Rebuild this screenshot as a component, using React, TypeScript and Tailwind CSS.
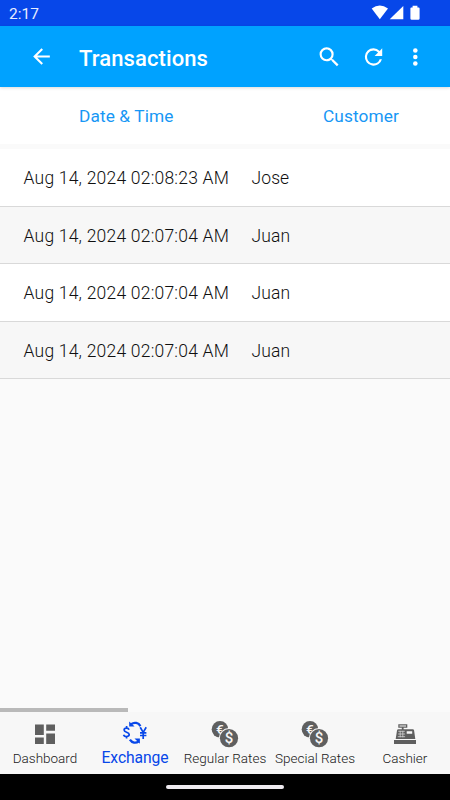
import type { ReactNode } from "react";

const transactions = [
  { date: "Aug 14, 2024 02:08:23 AM", customer: "Jose", style: "h-[58px] bg-white" },
  { date: "Aug 14, 2024 02:07:04 AM", customer: "Juan", style: "h-[57px] bg-[#f7f7f7]" },
  { date: "Aug 14, 2024 02:07:04 AM", customer: "Juan", style: "h-[58px] bg-white" },
  { date: "Aug 14, 2024 02:07:04 AM", customer: "Juan", style: "h-[57px] bg-[#f7f7f7]" },
];

function StatusBar() {
  return (
    <div className="flex h-[26px] shrink-0 items-center justify-between bg-[#0747e9] pl-[9px] pr-[30px] text-white">
      <span className="pt-[3px] text-[15.5px] leading-none text-[#e6edff]">2:17</span>
      <svg className="h-[26px] w-[49px]" viewBox="371 0 49 26" fill="currentColor">
        <path d="M371.7 8.4 Q379.8 2.6 388 8.4 L379.8 19.3Z" />
        <path d="M403.3 6v13.3h-13.6Z" />
        <path d="M412.6 5.8h4.8v1.6h1.2q1 0 1 1v10q0 1.4-1.4 1.4h-6.4q-1.4 0-1.4-1.4v-10q0-1 1-1h1.2Z" />
      </svg>
    </div>
  );
}

function AppBar() {
  return (
    <header className="relative z-10 flex h-[61px] shrink-0 items-center bg-[#00a2ff] pl-[29px] text-white shadow-[0_1px_3px_rgba(0,0,0,0.15)]">
      <svg className="size-[25px]" viewBox="0 0 24 24" fill="currentColor">
        <path d="M20 11H7.83l5.59-5.59L12 4l-8 8 8 8 1.41-1.41L7.83 13H20v-2z" />
      </svg>
      <h1 className="ml-[25px] flex-1 pt-[4px] text-[22px] font-medium leading-none tracking-[0.1px]">Transactions</h1>
      <svg className="mr-[18px] size-[26px]" viewBox="-0.3 0 24 24" fill="currentColor">
        <path d="M15.5 14h-.79l-.28-.27A6.471 6.471 0 0 0 16 9.5 6.5 6.5 0 1 0 9.5 16c1.61 0 3.09-.59 4.23-1.57l.27.28v.79l5 4.99L20.49 19l-4.99-5zm-6 0C7.01 14 5 11.99 5 9.5S7.01 5 9.5 5 14 7.01 14 9.5 11.99 14 9.5 14z" />
      </svg>
      <svg className="mr-[16px] size-[26px]" viewBox="-0.5 0 24 24" fill="currentColor">
        <path d="M17.65 6.35A7.958 7.958 0 0 0 12 4a8 8 0 1 0 7.73 10h-2.08A5.99 5.99 0 0 1 12 18c-3.31 0-6-2.69-6-6s2.69-6 6-6c1.66 0 3.14.69 4.22 1.78L13 11h7V4l-2.35 2.35z" />
      </svg>
      <svg className="mr-[22px] size-[26px]" viewBox="-0.3 0 24 24" fill="currentColor">
        <circle cx="12" cy="6" r="2.1" />
        <circle cx="12" cy="12" r="2.1" />
        <circle cx="12" cy="18" r="2.1" />
      </svg>
    </header>
  );
}

function DashboardIcon() {
  return (
    <svg className="size-[28px]" viewBox="0 0 28 28" fill="#5f5f5f">
      <path d="M4 4.5h8.8V15H4ZM15.2 4.5H24v6.3h-8.8ZM4 17.6h8.8V24H4ZM15.2 13.4H24V24h-8.8Z" />
    </svg>
  );
}

function ExchangeIcon() {
  return (
    <svg className="size-[28px]" viewBox="0 0 28 28" fill="none" stroke="#0747e9">
      <path d="M10.2 4.2c3-2.4 7.4-1.5 9.2 1.9" strokeWidth="2.3" />
      <path d="M8.2 1.4v5.2h5.4Z" fill="#0747e9" stroke="none" />
      <path d="M8.9 19.7c2 3.2 6 4 8.8 1.6" strokeWidth="2.3" />
      <path d="M18.9 23.8v-5.2h-5.4Z" fill="#0747e9" stroke="none" />
      <path d="M8 9.8C7.5 7.6 3.1 7.6 3.1 10c0 2.7 5.1 1.8 5.1 4.6 0 2.5-5 2.6-5.6.1M5.6 6v2.3M5.6 16v2.5" strokeWidth="1.7" />
      <path d="m19.2 7.3 3 5.1 3-5.1M22.2 12v7M19 12.9h6.4M19 15.5h6.4" strokeWidth="1.7" />
    </svg>
  );
}

function RatesIcon() {
  return (
    <svg className="size-[28px]" viewBox="0 0 28 28" fontFamily="Roboto, sans-serif" textAnchor="middle">
      <circle cx="9" cy="9.3" r="8.3" fill="#5f5f5f" />
      <text x="8.8" y="14" fontSize="13.5" fontWeight="500" fill="#f7f7f7">€</text>
      <circle cx="18" cy="18.2" r="10.2" fill="#f7f7f7" />
      <circle cx="18" cy="18.2" r="9.1" fill="#5f5f5f" />
      <text x="18" y="23.4" fontSize="15" fontWeight="500" fill="#f7f7f7">$</text>
    </svg>
  );
}

function CashierIcon() {
  return (
    <svg className="size-[28px]" viewBox="0 0 28 28" fill="#5f5f5f">
      <path d="M7.3 4.2h9v3.5h-3.7v1.5h9.1q1.2 0 1.4 1.2L24.3 19H4.7L6 10.4q.2-1.2 1.4-1.2h3.4V7.7H7.3Z" />
      <path d="M3 20h22v4H3Z" />
      <path d="M8.5 5.4h6.5v1H8.5ZM15.7 11.2h5.5v2.5h-5.5Z" fill="#f7f7f7" />
      <path d="M7.3 11.3h6.5M7.1 14h7M6.8 16.7h7.3M9.2 10.8v6.5M11.8 10.8v6.5" stroke="#d3d3d3" strokeWidth=".8" />
    </svg>
  );
}

function NavItem({ icon, label, active = false }: { icon: ReactNode; label: string; active?: boolean }) {
  return (
    <button className="flex w-[90px] shrink-0 flex-col items-center pt-[8px]">
      {icon}
      <span className={active ? "whitespace-nowrap pt-[2px] text-[15.7px] leading-[16px] tracking-[-0.1px] text-[#0747e9]" : "whitespace-nowrap pt-[2px] text-[13.5px] font-light leading-[17px] text-[#202020]"}>{label}</span>
    </button>
  );
}

export default function App() {
  return (
    <div className="flex h-[800px] w-[450px] flex-col overflow-hidden bg-[#fafafa] font-[Roboto,sans-serif]">
      <StatusBar />
      <AppBar />
      <main className="flex min-h-0 flex-1 flex-col">
        <div className="mb-[5px] flex h-[57px] shrink-0 items-center bg-white text-[17.3px] tracking-[0.1px] text-[#1797f5]">
          <span className="w-[244px] pl-[79px] pt-[2px]">Date &amp; Time</span>
          <span className="pl-[79px] pt-[2px]">Customer</span>
        </div>
        {transactions.map((row, i) => (
          <div key={i} className={`flex shrink-0 items-center border-b border-[#d9d9d9] pl-[23.5px] pt-[2px] text-[17.5px] font-[350] text-[#101010] ${row.style}`}>
            <span className="w-[228px] tracking-[0.21px]">{row.date}</span>
            <span className="tracking-[0.1px]">{row.customer}</span>
          </div>
        ))}
        <div className="mt-auto h-[4px] w-[128px] bg-[#b9b9b9]" />
      </main>
      <nav className="flex h-[62px] shrink-0 bg-[#f7f7f7]">
        <NavItem icon={<DashboardIcon />} label="Dashboard" />
        <NavItem icon={<ExchangeIcon />} label="Exchange" active />
        <NavItem icon={<RatesIcon />} label="Regular Rates" />
        <NavItem icon={<RatesIcon />} label="Special Rates" />
        <NavItem icon={<CashierIcon />} label="Cashier" />
      </nav>
      <div className="flex h-[26px] shrink-0 justify-center bg-black pt-[11px]">
        <div className="h-[4px] w-[118px] rounded-full bg-[#eeeaf0]" />
      </div>
    </div>
  );
}
